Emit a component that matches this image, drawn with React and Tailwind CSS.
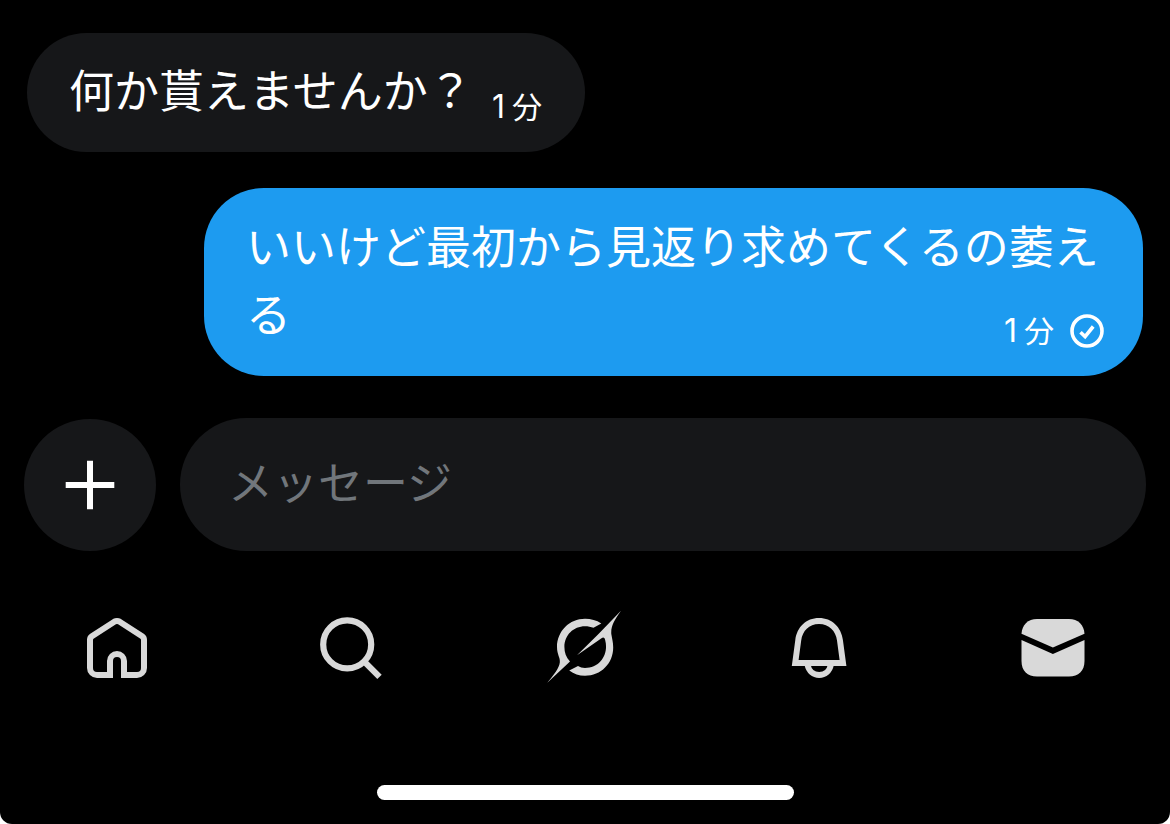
const jp = "font-['Noto_Sans_CJK_JP',sans-serif]";
const timeFont = "font-['Inter','Noto_Sans_CJK_JP',sans-serif]";

function Time({ className }) {
  return (
    <span className={`${timeFont} text-[30px] leading-[36px] whitespace-nowrap ${className}`}>
      <span className="text-[32px] tracking-[7px]">1</span>分
    </span>
  );
}

function HomeIcon() {
  return (
    <svg width="64" height="64" viewBox="15 16 64 64" fill="none" stroke="#d9d9d9" strokeWidth="6">
      <path d="M40 75V61a7 7 0 0 1 14 0V75H67a7 7 0 0 0 7-7V39.7q0-2.2-1.9-3.5L49.7 21.7q-2.7-1.5-5.4 0L21.9 36.2Q20 37.5 20 39.7V68a7 7 0 0 0 7 7Z" />
    </svg>
  );
}

function SearchIcon() {
  return (
    <svg width="64" height="64" viewBox="19 15.6 64 64" fill="none" stroke="#d9d9d9" strokeWidth="6.2">
      <circle cx="47.2" cy="44" r="24" />
      <path d="M64 61L79.5 76.5" />
    </svg>
  );
}

function GrokIcon() {
  return (
    <svg width="76" height="74" viewBox="17 16 76 74" fill="#d9d9d9">
      <path d="M71.3 28.4C66.5 25.2 61 23.7 55 23.7C39.5 23.7 27 36 27 52C27 60 30.5 62.5 29.8 67.5C29.2 73 23.5 80.5 17.3 87.7L40 66.5C36 62.5 34.4 57.5 34.4 52C34.4 40 43.5 31.2 55 31.2C58 31.2 61 31.8 63.5 32.7Z" />
      <path d="M91 15.7L69 38.5L47 60.3L71.5 43.2C73.5 42 74.5 42.7 75.1 44.7C79 59 70.5 73 55 73C52.3 73 50 72.3 48 71L39.2 75.4C44 79 49 80.7 55 80.7C71 80.7 83.2 68.5 83.2 52.5C83.2 47 82 43.5 81.3 39C80.8 31 84 26 91 15.7Z" />
    </svg>
  );
}

function BellIcon() {
  return (
    <svg width="64" height="64" viewBox="17 16 64 64" fill="#d9d9d9">
      <path fillRule="evenodd" d="M21.8 66L25.3 40C27 27 36 18 49 18S71.2 27 72.9 40L76.4 66ZM28.6 60H69.6L67 40.5C65.8 31 59 24 49 24S32.4 31 31.2 40.5Z" />
      <path d="M37.6 65C38.8 71 43.5 75 49.2 75S59.6 71 60.8 65" fill="none" stroke="#d9d9d9" strokeWidth="6" />
    </svg>
  );
}

function MailIcon() {
  return (
    <svg width="64" height="64" viewBox="21 16 64 64" fill="#d9d9d9">
      <path d="M21.5 33.7C22 25 28 19 37 19H69C78 19 84 25 84.5 33.7L52.9 47.6Z" />
      <path d="M21.5 40L52.9 54L84.5 40V61C84.5 71 78.5 76.5 69 76.5H37C27.5 76.5 21.5 71 21.5 61Z" />
    </svg>
  );
}

export default function App() {
  return (
    <div className="h-[824px] w-[1170px] bg-white">
      <main className={`flex h-full flex-col overflow-hidden rounded-b-[12px] bg-black pt-[33px] ${jp}`}>
        <div className="ml-[27px] flex h-[119px] w-[558px] items-center rounded-[60px] bg-[#161719] pl-[42px] text-white">
          <p className="mb-[7px] w-[405px] text-[45px] leading-[66px] whitespace-nowrap">何か貰えませんか？</p>
          <Time className="mt-[29px] ml-[18px]" />
        </div>

        <div className="mt-[36px] ml-[204px] flex h-[188px] w-[939px] flex-col rounded-[60px] bg-[#1d9bf0] pt-[23px] pl-[42px] text-white">
          <p className="text-[45px] leading-[68px] whitespace-nowrap">
            いいけど最初から見返り求めてくるの萎え
          </p>
          <div className="flex h-[68px] justify-between pr-[38px]">
            <p className="text-[45px] leading-[68px]">る</p>
            <div className="mt-[34px] flex h-[36px] items-center gap-[15px]">
              <Time className="" />
              <svg width="36" height="36" viewBox="79.3 13 36 36" fill="none" stroke="currentColor">
                <circle cx="97.3" cy="31" r="15" strokeWidth="3.6" />
                <path d="M90.8 32.2L95.4 36.6L103.5 26.5" strokeWidth="3.6" />
              </svg>
            </div>
          </div>
        </div>

        <div className="mt-[42px] ml-[24px] flex items-center gap-[24px]">
          <button aria-label="追加" className="flex h-[132px] w-[132px] items-center justify-center rounded-full bg-[#161719]">
            <svg width="50" height="50" viewBox="0 0 50 50" stroke="#fff" strokeWidth="6">
              <path d="M25 .7V49.3M.7 25H49.3" />
            </svg>
          </button>
          <div className="flex h-[133px] w-[966px] items-center rounded-full bg-[#161719] pb-[8px] pl-[48px] text-[45px] text-[#71767b]">
            メッセージ
          </div>
        </div>

        <nav className="mt-[60px] grid h-[74px] grid-cols-5 place-items-center">
          <HomeIcon />
          <SearchIcon />
          <GrokIcon />
          <BellIcon />
          <MailIcon />
        </nav>

        <div className="mx-auto mt-[100px] h-[15px] w-[417px] rounded-full bg-white" />
      </main>
    </div>
  );
}
